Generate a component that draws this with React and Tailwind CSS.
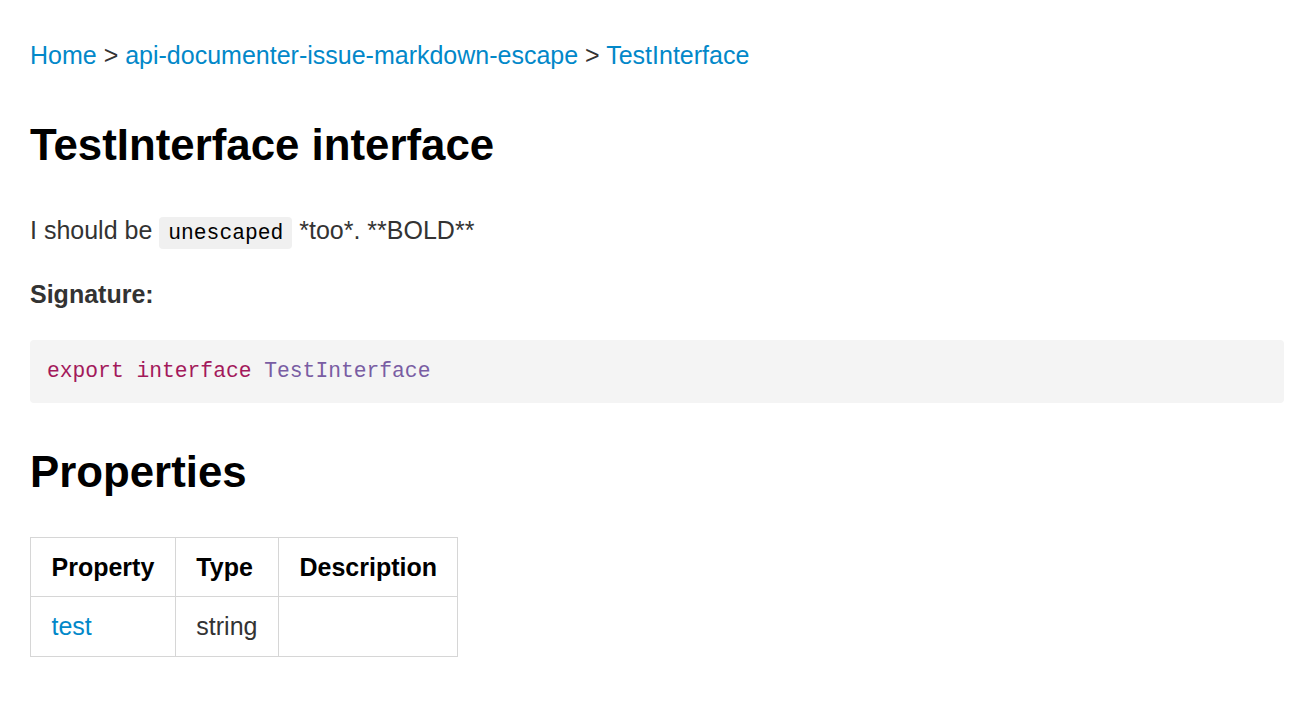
export default function App() {
  const link = "text-[#0288c9]";
  const th = "border border-[#d6d6d6] px-[20.5px] py-[11px] text-left leading-[36px] font-bold text-black";
  const td = "border border-[#d6d6d6] px-[20.5px] py-[11px] leading-[37px]";
  return (
    <div className="min-h-[713px] bg-white pl-[30px] pr-[32px] pt-[37px] text-[25px] text-[#333] font-['Liberation_Sans',Arial,sans-serif]">
      <div className="leading-[36px]">
        <a className={link}>Home</a> &gt; <a className={link}>api-documenter-issue-markdown-escape</a> &gt;{" "}
        <a className={link}>TestInterface</a>
      </div>
      <h1 className="mt-[46px] text-[43.8px] leading-[52px] font-bold text-black">TestInterface interface</h1>
      <p className="mt-[41px] leading-[36px]">
        I should be{" "}
        <code className="rounded-[4px] bg-[#f0f0f0] px-[9px] py-[4px] font-['Liberation_Mono',monospace] text-[21.3px] text-black">
          unescaped
        </code>{" "}
        *too*. **BOLD**
      </p>
      <p className="mt-[25px] leading-[36px] font-bold">Signature:</p>
      <pre className="mt-[28px] rounded-[4px] bg-[#f4f4f4] px-[17px] py-[17px] font-['Liberation_Mono',monospace] text-[21.3px] leading-[29px]">
        <span className="text-[#a3195b]">export</span> <span className="text-[#a3195b]">interface</span>{" "}
        <span className="text-[#795da3]">TestInterface</span>
      </pre>
      <h2 className="mt-[43px] text-[43.8px] leading-[52px] font-bold text-black">Properties</h2>
      <table className="mt-[39px] border-collapse">
        <thead>
          <tr>
            <th className={th}>Property</th>
            <th className={th}>Type</th>
            <th className={th}>Description</th>
          </tr>
        </thead>
        <tbody>
          <tr>
            <td className={td}>
              <a className={link}>test</a>
            </td>
            <td className={td}>string</td>
            <td className={td}></td>
          </tr>
        </tbody>
      </table>
    </div>
  );
}
